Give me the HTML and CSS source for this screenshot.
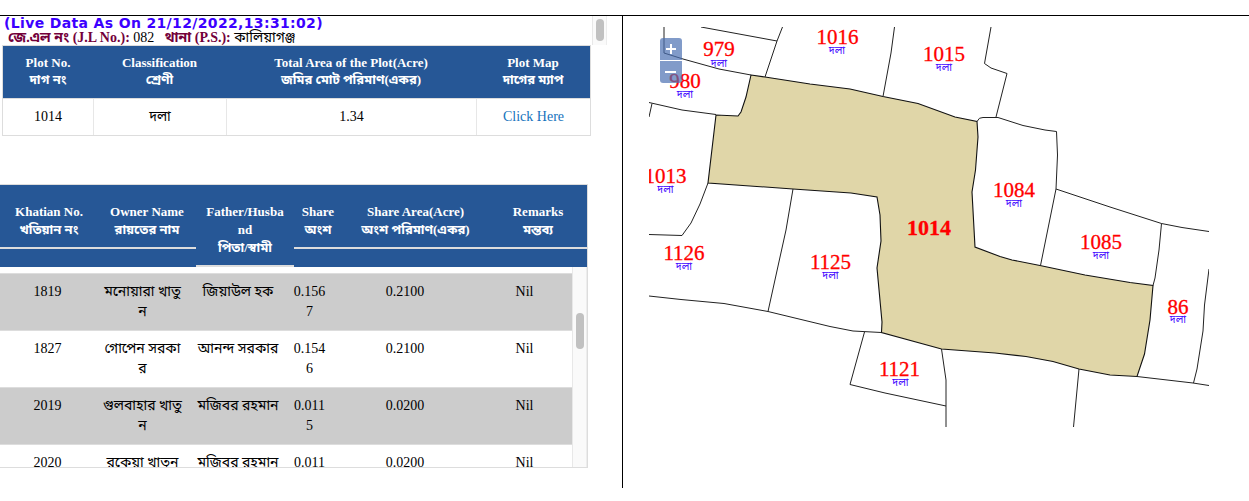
FILE: index.html
```html
<!DOCTYPE html>
<html lang="bn">
<head>
<meta charset="utf-8">
<title>Plot Information</title>
<link rel="stylesheet" href="styles.css">
</head>
<body>
<main class="page">
  <section class="info">
    <div class="summary">
      <div class="summary-text">
        <div class="live"><span>(Live Data As On 21/12/2022,13:31:02)</span></div>
        <div class="place"><b>জে.এল নং (J.L No.):</b> 082 <b class="ps">থানা (P.S.):</b> কালিয়াগঞ্জ</div>
      </div>
      <div class="track"><div class="thumb thumb-small"></div></div>
    </div>
    <div class="plot">
      <div class="plot-row plot-head">
        <div>Plot No.<br>দাগ নং</div>
        <div>Classification<br>শ্রেণী</div>
        <div>Total Area of the Plot(Acre)<br>জমির মোট পরিমাণ(একর)</div>
        <div>Plot Map<br>দাগের ম্যাপ</div>
      </div>
      <div class="plot-row plot-body">
        <div>1014</div><div>দলা</div><div>1.34</div><div><a class="link">Click Here</a></div>
      </div>
    </div>
    <div class="owners">
      <div class="owners-head">
        <div>Khatian No.<br>খতিয়ান নং</div>
        <div>Owner Name<br>রায়তের নাম</div>
        <div>Father/Husba<br>nd<br>পিতা/স্বামী</div>
        <div>Share<br>অংশ</div>
        <div>Share Area(Acre)<br>অংশ পরিমাণ(একর)</div>
        <div>Remarks<br>মন্তব্য</div>
      </div>
      <div class="owners-scroll">
        <div class="owners-rows">
          <div class="row odd"><div>1819</div><div>মনোয়ারা খাতু<br>ন</div><div>জিয়াউল হক</div><div>0.156<br>7</div><div>0.2100</div><div>Nil</div></div>
          <div class="row"><div>1827</div><div>গোপেন সরকা<br>র</div><div>আনন্দ সরকার</div><div>0.154<br>6</div><div>0.2100</div><div>Nil</div></div>
          <div class="row odd"><div>2019</div><div>গুলবাহার খাতু<br>ন</div><div>মজিবর রহমান</div><div>0.011<br>5</div><div>0.0200</div><div>Nil</div></div>
          <div class="row"><div>2020</div><div>রকেয়া খাতুন</div><div>মজিবর রহমান</div><div>0.011</div><div>0.0200</div><div>Nil</div></div>
        </div>
        <div class="track"><div class="thumb thumb-large"></div></div>
      </div>
    </div>
  </section>
  <section class="map-pane">
    <div class="map">
      <svg class="map-svg" viewBox="649 27 560 400" width="560" height="400">
        <path class="selected" d="M751 75L765 77L810 84L850 89L883 96.500L918 103.500L955 117L977 121.500L978 137L975.500 170L972 192L975 247L1000 256.500L1012 260L1040 265.500L1085 275L1130 282.500L1153 285.500L1150 320L1144.500 354L1137 376.500L1110 375L1079 369L1053 361.500L1026 356.500L995 353L941.500 349L881.500 332.500L882 322L877 268L881 241L880 215L877 197L851 193L793 189L708 183L716 115L738 116L741 112L746 97Z"/>
        <g class="line">
          <path d="M664 27V53L683 59L719 69L751 75"/>
          <path d="M701 27L777 41L782.500 27M777 41L765 77"/>
          <path d="M894.500 27L891 53L883 96.500"/>
          <path d="M991 27L984.500 63.500L991 68L1007 73.500L996 117"/>
          <path d="M977 121.500Q979 117 983 117.500H998L1023 125.500L1045 130L1056.500 131.500L1057.500 155L1056 189L1040.500 265.500"/>
          <path d="M1056 189L1110 207L1161.500 223.500L1182 227.500L1209 231.500M1161.500 223.500L1159 250L1155 278L1153 285.500"/>
          <path d="M1209 269L1204.500 305L1203 331L1197 369L1193.500 383M1137 376.500L1193 383L1209 385.500"/>
          <path d="M649 102.500L682 110L716 114.500M652 103.500L649 117"/>
          <path d="M708 183L700 204L691 223L682 235.500L649 234.500"/>
          <path d="M793 189L786 230L768 311.500M649 296L681 299.500L724 303.500L768 311.500L830 326.500L853 331L881.500 332.500"/>
          <path d="M864.500 332L850 384.500L885 393L946 406M941.500 349L946 380V427M1079 369L1073.500 427"/>
        </g>
        <g class="num">
          <text x="719" y="56">979</text><text x="685" y="88">980</text>
          <text x="837.500" y="44">1016</text><text x="944" y="61">1015</text>
          <text x="665.500" y="183">1013</text><text x="1014" y="197">1084</text>
          <text x="1101" y="249">1085</text><text x="684" y="260">1126</text>
          <text x="830.500" y="269">1125</text><text x="1178" y="313.500">86</text>
          <text x="899.500" y="376">1121</text><text class="num-selected" x="929" y="235">1014</text>
        </g>
        <g class="kind">
          <text x="719" y="67">দলা</text><text x="685" y="98">দলা</text>
          <text x="837" y="54">দলা</text><text x="944" y="71">দলা</text>
          <text x="665.500" y="193">দলা</text><text x="1014" y="207">দলা</text>
          <text x="1101" y="259">দলা</text><text x="684" y="270">দলা</text>
          <text x="830.500" y="279">দলা</text><text x="1178" y="323">দলা</text>
          <text x="900.500" y="386">দলা</text>
        </g>
      </svg>
      <div class="zoom">
        <svg class="zoom-in" width="22" height="22" viewBox="0 0 22 22"><path d="M6 11H16M11 6V16"/></svg>
        <svg class="zoom-out" width="22" height="22" viewBox="0 0 22 22"><path d="M5 11H16"/></svg>
      </div>
    </div>
  </section>
</main>
</body>
</html>
```
FILE: styles.css
```css
body { margin: 0; background: #fff; color: #000; font: 14px/20px "Liberation Serif", "Noto Sans Bengali", "Noto Serif Bengali", "Lohit Bengali", serif; overflow: hidden; }
.page { display: grid; grid-template-columns: 622px 1fr; height: 472px; margin-top: 15px; border-top: 1px solid #000; }
.info { overflow: hidden; }
.map-pane { border-left: 1px solid #000; }
.summary { display: flex; width: 607px; height: 29px; overflow: hidden; }
.summary-text { width: 592px; white-space: nowrap; }
.live { height: 13px; padding-left: 4px; font: bold 14px/14px "DejaVu Sans", sans-serif; letter-spacing: .35px; color: #3c00ff; }
.place { padding-left: 8px; line-height: 17px; }
.place b { color: #73003a; }
.ps { margin-left: 7px; }
.track { box-sizing: border-box; width: 15px; border-left: 1px solid #e8e8e8; border-right: 1px solid #ededed; background: #fafafa; }
.thumb { width: 8px; margin-left: 3px; border-radius: 4px; background: #c1c1c1; }
.thumb-small { height: 22px; margin-top: 3px; }
.thumb-large { height: 36px; margin-top: 46px; }
.plot { width: 587px; margin-left: 2px; border: 1px solid #ddd; }
.plot-row { display: grid; grid-template-columns: 90px 133px 250px 114px; text-align: center; }
.plot-head { height: 52px; box-sizing: border-box; padding-top: 8px; background: #265796; color: #fff; font-weight: bold; font-size: 13px; line-height: 17px; }
.plot-body { height: 36px; border-top: 1px solid #ddd; line-height: 35px; }
.plot-body > div + div { border-left: 1px solid #e7e7e7; }
.link { color: #1673bd; }
.owners { width: 587px; height: 282px; margin-top: 48px; border: 1px solid #ddd; border-left: 0; overflow: hidden; }
.owners-head { display: grid; grid-template-columns: 98px 98px 98px 48px 147px 98px; align-items: start; height: 82px; background: #265796; color: #fff; font-weight: bold; font-size: 13px; line-height: 18px; text-align: center; }
.owners-head > div { padding: 18px 0 8px; border-bottom: 2px solid #ddd; }
.owners-scroll { display: flex; height: 200px; overflow: hidden; }
.owners-rows { width: 572px; padding-top: 6px; }
.row { display: grid; grid-template-columns: 95px 95px 96px 47px 144px 95px; box-sizing: border-box; height: 57px; padding-top: 8px; border-top: 1px solid #ddd; text-align: center; white-space: nowrap; }
.odd { background: #ccc; }
.map { position: relative; width: 560px; height: 400px; margin: 11px 0 0 26px; }
.map-svg { display: block; }
.selected { fill: #e0d6a8; stroke: #111; stroke-width: 1.100; }
.line { fill: none; stroke: #222; stroke-width: 1; }
.num { fill: #f00; stroke: #f00; stroke-width: .3; font-size: 21px; text-anchor: middle; }
.num-selected { font-size: 22px; font-weight: bold; }
.kind { fill: #3c00ff; font-size: 10.500px; text-anchor: middle; }
.zoom { position: absolute; left: 11px; top: 11px; display: grid; gap: 1px; }
.zoom svg { display: block; background: rgba(76, 112, 178, .7); fill: none; stroke: #fff; stroke-width: 2; }
.zoom .zoom-in { border-radius: 3px 3px 0 0; }
.zoom .zoom-out { border-radius: 0 0 3px 3px; }
```
